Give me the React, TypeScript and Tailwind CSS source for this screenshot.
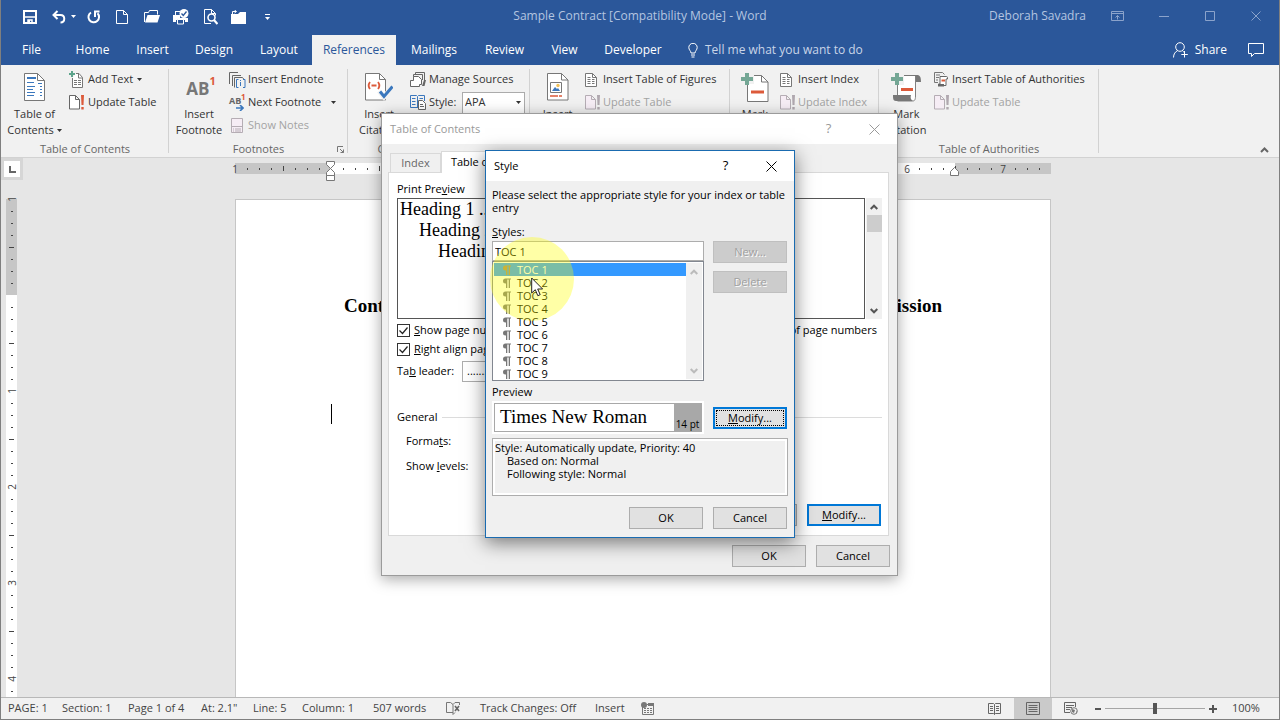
import type { ReactNode } from "react";

const tabs = [
  { name: "File", width: "w-[61px]" },
  { name: "Home", width: "w-[61px]" },
  { name: "Insert", width: "w-[59px]" },
  { name: "Design", width: "w-[64px]" },
  { name: "Layout", width: "w-[66px]" },
  { name: "References", width: "w-[84px]", active: true },
  { name: "Mailings", width: "w-[76px]" },
  { name: "Review", width: "w-[65px]" },
  { name: "View", width: "w-[55px]" },
  { name: "Developer", width: "w-[82px]" },
];

const styleNames = ["TOC 1", "TOC 2", "TOC 3", "TOC 4", "TOC 5", "TOC 6", "TOC 7", "TOC 8", "TOC 9"];

type IconProps = { w: number; h: number; children: ReactNode; className?: string };

const Icon = ({ w, h, children, className = "" }: IconProps) => (
  <svg width={w} height={h} viewBox={`0 0 ${w} ${h}`} fill="none" className={`shrink-0 ${className}`} aria-hidden="true">
    {children}
  </svg>
);

const Caret = ({ className = "" }: { className?: string }) => (
  <Icon w={5} h={3} className={className}>
    <path d="M0 0h5L2.500 3z" fill="currentColor" />
  </Icon>
);

/* ---------- Quick access icons ---------- */

const SaveIcon = () => (
  <Icon w={14} h={14}>
    <path d="M1 1h12v12H1z" stroke="#fff" strokeWidth="2" />
    <path d="M2 7h10M5 13v-3h4v3" stroke="#fff" strokeWidth="1.500" />
    <path d="M5 10h2v3H5z" fill="#fff" />
  </Icon>
);

const UndoIcon = () => (
  <Icon w={14} h={14}>
    <path d="M5.500 1 1.500 5l4 4M2 5h6.500c5 0 5 7.500 0 7.500" stroke="#fff" strokeWidth="2" />
  </Icon>
);

const RedoIcon = () => (
  <Icon w={14} h={14}>
    <path d="M4 2.500a5.300 5.300 0 1 0 6.500.8" stroke="#fff" strokeWidth="2" />
    <path d="M7 1.500h5.500M8 1v6" stroke="#fff" strokeWidth="2" />
  </Icon>
);

const NewIcon = () => (
  <Icon w={12} h={14}>
    <path d="M.500.500h7l4 4v9H.500zM7.500.500v4h4" stroke="#fff" />
  </Icon>
);

const OpenIcon = () => (
  <Icon w={16} h={13}>
    <path d="M.500 12V2.500h4l1-2h8v4" stroke="#fff" />
    <path d="M3.500 5H16l-2.500 7.500H1z" fill="#fff" />
  </Icon>
);

const PrintIcon = () => (
  <Icon w={16} h={16}>
    <path d="M0 6h2V2h5v1H3v3h4v3h8v4h-3v-2H3v2H0z" fill="#fff" />
    <path d="M4.500 10.500h6v4.500h-6z" fill="#2b579a" stroke="#fff" />
    <circle cx="11" cy="4.500" r="4.500" fill="#fff" />
    <path d="m8.500 4.500 1.800 2 3.200-4" stroke="#2b579a" strokeWidth="1.300" />
  </Icon>
);

const PreviewIcon = () => (
  <Icon w={14} h={16}>
    <path d="M.500.500h7l4 4v2M.500.500v14H7M7.500.500v4h4" stroke="#fff" />
    <circle cx="7.500" cy="8.500" r="3.500" stroke="#fff" strokeWidth="1.600" />
    <path d="m10 11 3.500 4" stroke="#fff" strokeWidth="2.200" />
  </Icon>
);

const FolderIcon = () => (
  <Icon w={15} h={14}>
    <path d="M0 4h7l2-2h6v12H0z" fill="#fff" />
    <path d="M1.500 4V1.500H5M3.500 0l2 1.500-2 1.500" stroke="#fff" />
  </Icon>
);

/* ---------- Ribbon icons ---------- */

const TocIcon = () => (
  <Icon w={21} h={28}>
    <path d="M.500.500h13l7 7v20H.500z" fill="#fff" stroke="#777" />
    <path d="M13.500.500v7h7" stroke="#777" />
    <path d="M3 5h9" stroke="#3a77bd" strokeWidth="2" />
    <path d="M3 9.500h7M3 13.500h8M3 16.500h6M3 19.500h8M3 22.500h7M14 10.500h4M16 13.500h2M16 16.500h2M16 19.500h2M16 22.500h2" stroke="#3a77bd" />
  </Icon>
);

const AddTextIcon = () => (
  <Icon w={15} h={17}>
    <path d="M3.500 7v9.500h10V6.500l-3.500-4H7" fill="#fff" stroke="#777" />
    <path d="M9.500 3v4h4M5 9.500h3M5 11.500h3M5 13.500h3M9 9.500h3M9 11.500h3M9 13.500h3" stroke="#777" />
    <path d="M3 0v6M0 3h6" stroke="#5da48c" strokeWidth="2" />
  </Icon>
);

const UpdateIcon = ({ disabled = false }: { disabled?: boolean }) => (
  <Icon w={16} h={15}>
    <path d="M.500.500h6l4 4v9.500H.500zM6.500.500v4h4" fill={disabled ? "#f6edf5" : "#fff"} stroke={disabled ? "#b5adb4" : "#666"} />
    <path d="M12 0h3l-.500 10h-2zM12.300 12h2.400v2.400h-2.400z" fill={disabled ? "#b0a8af" : "#dc5a3a"} />
  </Icon>
);

const EndnoteIcon = () => (
  <Icon w={17} h={16}>
    <path d="M.500 12V.500H9M3.500 14V3.500H12M5.500 15.500v-10h8l2 2.500" stroke="#666" />
    <path d="M7 7h10v9H7z" fill="#f1f1f1" />
    <path d="M9.500 7.500h-2v8h2M14 7.500h2v8h-2M11.500 10v4M11.500 8v1" stroke="#3a77bd" />
  </Icon>
);

const NextFootnoteIcon = () => (
  <span className="relative block h-4 w-[17px] shrink-0 font-bold text-[#666]">
    <span className="absolute top-0 left-0 text-[9px] leading-[12px]">AB</span>
    <span className="absolute -top-0.5 left-3 text-[8px] leading-[8px] text-[#dc5a3a]">1</span>
    <svg width="8" height="6" viewBox="0 0 8 6" className="absolute right-0.5 bottom-0" aria-hidden="true">
      <path d="M0 3h6M4 0l3 3-3 3" stroke="#3a77bd" strokeWidth="1.600" fill="none" />
    </svg>
  </span>
);

const NotesIcon = () => (
  <Icon w={12} h={15} className="ml-0.5">
    <path d="M.500.500h11v14H.500zM0 8.500h12" fill="#f6edf5" stroke="#b5adb4" />
    <path d="M2 11h1M4 11h6M2 13h1M4 13h6" stroke="#b5adb4" />
  </Icon>
);

const CitationIcon = () => (
  <Icon w={28} h={28}>
    <path d="M.500.500h14l6 6v20.500H.500z" fill="#fff" stroke="#777" />
    <path d="M14.500.500v6h6" stroke="#777" />
    <path d="M5 9c-1.500 2-1.500 5 0 7M13 9c1.500 2 1.500 5 0 7M6.500 12.500h5" stroke="#dc5a3a" strokeWidth="1.800" />
    <path d="m14 18 5 6 9-11" stroke="#f1f1f1" strokeWidth="5" />
    <path d="m15 18.500 4 5 8.500-10" stroke="#3a77bd" strokeWidth="3" />
  </Icon>
);

const SourcesIcon = () => (
  <Icon w={16} h={15}>
    <path d="M5.500 2V.500h9V10M3.500 5V2.500h9V8" stroke="#666" />
    <path d="M.500 14.500v-6h3v-4h5l3 3v5h-2v2z" fill="#fff" stroke="#666" />
    <path d="m12 14 2-6h2l-1.500 6z" fill="#666" />
  </Icon>
);

const StyleIcon = () => (
  <Icon w={16} h={15}>
    <path d="M.500.500h6l1 1 1-1h6V6M.500.500v12H7M7.500 2v11" stroke="#3a77bd" />
    <path d="M2 3.500h3.500M2 6.500h3.500M2 9.500h3.500M9.500 3.500H13" stroke="#3a77bd" />
    <path d="M8.500 5.500h4l3 3v6h-7zM10 9.500h3M10 11.500h4" fill="#fff" stroke="#666" />
  </Icon>
);

const CaptionIcon = () => (
  <Icon w={22} h={28}>
    <path d="M.500.500h14l6.500 6.500v20H.500z" fill="#fff" stroke="#777" />
    <path d="M14.500.500v6.500H21M3.500 9.500h11v10h-11z" stroke="#777" />
    <circle cx="11" cy="12.500" r="1.700" fill="#f0c05a" />
    <path d="m5 18 3-4 2 2 1-1 2 3z" fill="#3a77bd" />
    <path d="M3 23h8M12 23h3" stroke="#dc5a3a" strokeWidth="1.500" />
  </Icon>
);

const FiguresIcon = () => (
  <Icon w={12} h={14}>
    <path d="M.500.500h7l4 4v9H.500z" fill="#fff" stroke="#777" />
    <path d="M7.500.500v4h4M2.500 4.500h3M2.500 6.500h3M2.500 8.500h3M2.500 10.500h3M7 6.500h2.500M7 8.500h2.500M7 10.500h2.500" stroke="#777" />
  </Icon>
);

const MarkEntryIcon = () => (
  <Icon w={28} h={31}>
    <path d="M6.500 3.500h14l6.500 6.500v19.500H6.500z" fill="#fff" stroke="#777" />
    <path d="M20.500 3.500v6.500H27" stroke="#777" />
    <path d="M0 0h13v12H0z" fill="#f1f1f1" />
    <path d="M6 1v12M0 7h12" stroke="#74a795" strokeWidth="4" />
    <path d="M10 20h13" stroke="#dc5a3a" strokeWidth="3" />
  </Icon>
);

const MarkCitationIcon = () => (
  <Icon w={31} h={31}>
    <path d="M6.500 3.500h18V24c0 4-1 5-3 5H6.500z" fill="#fff" stroke="#808080" />
    <path d="M10 3h16c3 0 4 2 4 7h-5V6c0-2 0-2-2-2H10zM2 23h18c-1 3 0 5 2 6H5c-3 0-3-3-3-6z" fill="#777" />
    <path d="M0 0h13v13H0z" fill="#f1f1f1" />
    <path d="M6 1v12M0 7h12" stroke="#74a795" strokeWidth="4" />
    <path d="M10 17.500h12" stroke="#dc5a3a" strokeWidth="3" />
  </Icon>
);

const AuthoritiesIcon = () => (
  <Icon w={14} h={15}>
    <path d="M.500.500h8l2 2M.500.500v10H4M2 3h4M2 5.500h3M2 8h2" stroke="#777" />
    <path d="M6 4.500h6.500c1 0 1 1 1 2.500H12v6.500H4.500V12H6z" fill="#fff" stroke="#666" />
    <path d="M7.500 8.500H11" stroke="#dc5a3a" strokeWidth="2" />
    <path d="M4 12h6v2.500H4z" fill="#666" />
  </Icon>
);

/* ---------- Ribbon ---------- */

const Group = ({ label, width, launcher, children }: { label: string; width: string; launcher?: boolean; children: ReactNode }) => (
  <section className={`${width} relative flex shrink-0 flex-col pt-[3px]`} aria-label={label}>
    <div className="flex h-[73px] items-start">{children}</div>
    <p className="text-center leading-4 text-[#666]">{label}</p>
    {launcher && (
      <button className="absolute right-1 bottom-1" aria-label="Footnote settings">
        <Icon w={7} h={7}>
          <path d="M.500 6V.500H6M3 3l3.500 3.500M3.500 6.500h3v-3" stroke="#777" />
        </Icon>
      </button>
    )}
    <span className="absolute top-1 right-0 bottom-1 w-px bg-[#d2d2d2]" />
  </section>
);

const BigButton = ({ icon, width, children }: { icon: ReactNode; width: string; children: ReactNode }) => (
  <button className={`${width} shrink-0 text-center leading-4 whitespace-nowrap`}>
    <span className="flex h-[38px] items-center justify-center">{icon}</span>
    {children}
  </button>
);

const SmallButton = ({ icon, disabled, caret, iconWidth, children }: { icon: ReactNode; disabled?: boolean; caret?: string; iconWidth: string; children: ReactNode }) => (
  <button disabled={disabled} className="flex h-[23px] items-center whitespace-nowrap disabled:text-[#a3a3a3]">
    <span className={`${iconWidth} flex`}>{icon}</span>
    {children}
    {caret && <Caret className={caret} />}
  </button>
);

const Ribbon = () => (
  <div className="flex h-[93px] shrink-0 border-b border-[#d2d2d2] bg-[#f1f1f1] text-[11px] text-[#333]">
    <Group label="Table of Contents" width="w-[168px]">
      <BigButton icon={<TocIcon />} width="w-[67px]">
        Table of
        <br />
        <span className="inline-flex items-center gap-[3px]">Contents <Caret /></span>
      </BigButton>
      <div className="pl-px">
        <SmallButton icon={<AddTextIcon />} iconWidth="w-[19px]" caret="ml-1">Add Text</SmallButton>
        <SmallButton icon={<UpdateIcon />} iconWidth="w-[19px]">Update Table</SmallButton>
      </div>
    </Group>
    <Group label="Footnotes" width="w-[179px]" launcher>
      <BigButton
        width="w-[60px]"
        icon={
          <span className="flex items-start pl-1 font-bold">
            <span className="pt-1 text-[17px] leading-6 text-[#777]">AB</span>
            <span className="text-[11px] leading-4 text-[#dc5a3a]">1</span>
          </span>
        }
      >
        Insert
        <br />
        Footnote
      </BigButton>
      <div>
        <SmallButton icon={<EndnoteIcon />} iconWidth="w-[19px]">Insert Endnote</SmallButton>
        <SmallButton icon={<NextFootnoteIcon />} iconWidth="w-[19px]" caret="ml-2.5">Next Footnote</SmallButton>
        <SmallButton icon={<NotesIcon />} iconWidth="w-[19px]" disabled>Show Notes</SmallButton>
      </div>
    </Group>
    <Group label="Citations & Bibliography" width="w-[182px]">
      <BigButton icon={<CitationIcon />} width="w-[62px]">
        Insert
        <br />
        Citation
      </BigButton>
      <div>
        <SmallButton icon={<SourcesIcon />} iconWidth="w-[19px]">Manage Sources</SmallButton>
        <div className="flex h-[23px] items-center">
          <span className="flex w-[19px]"><StyleIcon /></span>
          <label htmlFor="citation-style" className="w-[33px]">Style:</label>
          <span className="relative flex items-center">
            <select id="citation-style" className="h-[22px] w-[63px] appearance-none border border-[#ababab] bg-white px-0.5">
              <option>APA</option>
            </select>
            <Caret className="absolute right-1" />
          </span>
        </div>
      </div>
    </Group>
    <Group label="Captions" width="w-[200px]">
      <BigButton icon={<CaptionIcon />} width="w-[55px]">
        Insert
        <br />
        Caption
      </BigButton>
      <div>
        <SmallButton icon={<FiguresIcon />} iconWidth="w-[18px]">Insert Table of Figures</SmallButton>
        <SmallButton icon={<UpdateIcon disabled />} iconWidth="w-[18px]" disabled>Update Table</SmallButton>
      </div>
    </Group>
    <Group label="Index" width="w-[149px]">
      <BigButton icon={<MarkEntryIcon />} width="w-[50px]">
        Mark
        <br />
        Entry
      </BigButton>
      <div>
        <SmallButton icon={<FiguresIcon />} iconWidth="w-[18px]">Insert Index</SmallButton>
        <SmallButton icon={<UpdateIcon disabled />} iconWidth="w-[18px]" disabled>Update Index</SmallButton>
      </div>
    </Group>
    <Group label="Table of Authorities" width="w-[220px]">
      <BigButton icon={<MarkCitationIcon />} width="w-[55px]">
        Mark
        <br />
        Citation
      </BigButton>
      <div>
        <SmallButton icon={<AuthoritiesIcon />} iconWidth="w-[18px]">Insert Table of Authorities</SmallButton>
        <SmallButton icon={<UpdateIcon disabled />} iconWidth="w-[18px]" disabled>Update Table</SmallButton>
      </div>
    </Group>
    <button className="mt-auto mr-2.5 mb-1 ml-auto" aria-label="Collapse the ribbon">
      <Icon w={9} h={6}>
        <path d="m1 5 3.500-3.500L8 5" stroke="#666" strokeWidth="2" />
      </Icon>
    </button>
  </div>
);

/* ---------- Rulers ---------- */

// One mark per eighth of an inch, counted from the margin at zero
const Mark = ({ n, vertical }: { n: number; vertical?: boolean }) => {
  const whole = n % 8 === 0;
  const half = n % 4 === 0;
  const cell = vertical ? "h-3 w-full" : "h-full w-3";
  return (
    <span className={`${cell} flex shrink-0 items-center justify-center text-[10px] leading-[12px] text-[#444]`}>
      {whole && n !== 0 && <span className={vertical ? "-rotate-90" : ""}>{Math.abs(n / 8)}</span>}
      {!whole && <span className={`bg-[#444] ${vertical ? (half ? "h-px w-[5px]" : "h-px w-0.5") : half ? "h-[5px] w-px" : "h-0.5 w-px"}`} />}
    </span>
  );
};

const Segment = ({ from, count, className, vertical }: { from: number; count: number; className: string; vertical?: boolean }) => (
  <div className={`flex shrink-0 ${vertical ? "w-[11px] flex-col" : "h-[11px]"} ${className}`}>
    <div className={`flex ${vertical ? "-mt-1.5 flex-col" : "-ml-1.5 h-full"}`}>
      {Array.from({ length: count }, (_, i) => (
        <Mark key={i} n={from + i} vertical={vertical} />
      ))}
    </div>
  </div>
);

const Document = () => (
  <main className="flex min-h-0 flex-1 flex-col overflow-hidden bg-[#e6e6e6]">
    <div className="flex h-[41px] shrink-0">
      <div className="w-[17px] shrink-0">
        <button className="flex h-[22px] w-[22px] items-center justify-center border-3 border-[#d6d6d6] bg-white" aria-label="Left tab">
          <Icon w={7} h={7}>
            <path d="M1 0v6h6" stroke="#666" strokeWidth="2" />
          </Icon>
        </button>
      </div>
      <div className="flex flex-1 justify-center pt-[5px] pr-[11px]">
        <div className="relative flex w-[816px]">
          <Segment from={-8} count={8} className="w-24 bg-[#c6c6c6]" />
          <Segment from={0} count={52} className="w-[624px] bg-white" />
          <Segment from={52} count={8} className="w-24 bg-[#c6c6c6]" />
          <Icon w={9} h={22} className="absolute -top-0.5 left-[91px]">
            <path d="M.500.500h8v3l-4 4-4-4zM.500 14.500v-3l4-4 4 4v3zM.500 14.500h8v5h-8z" fill="#fff" stroke="#777" />
          </Icon>
          <Icon w={9} h={9} className="absolute top-1 left-[715px]">
            <path d="M.500 8.500v-4l4-4 4 4v4z" fill="#fff" stroke="#777" />
          </Icon>
        </div>
      </div>
    </div>
    <div className="flex min-h-0 flex-1">
      <div className="w-[17px] shrink-0 pl-[5px]">
        <Segment vertical from={-8} count={8} className="h-24 bg-[#c6c6c6]" />
        <Segment vertical from={0} count={34} className="h-[408px] bg-white" />
      </div>
      <div className="flex flex-1 justify-center pr-[11px]">
        <article className="w-[816px] border border-b-0 border-[#c6c6c6] bg-white px-[95px] pt-[95px] font-['Liberation_Serif',serif] text-black">
          <h1 className="mx-auto flex w-[598px] justify-between text-[19px] leading-[22px] font-bold">
            <span>Contract</span>
            <span>Commission</span>
          </h1>
          <div className="mt-[87px] h-5 w-px bg-black" />
        </article>
      </div>
    </div>
  </main>
);

/* ---------- Dialogs ---------- */

const DialogTitle = ({ title, color }: { title: string; color: string }) => (
  <header className={`${color} flex h-[30px] items-center bg-white pl-2`}>
    <h2 className="flex-1">{title}</h2>
    <button className="w-[45px] text-[13px]" aria-label="Help">?</button>
    <button className="flex w-[46px] justify-center" aria-label="Close">
      <Icon w={11} h={11}>
        <path d="m.500.500 10 10M10.500.500l-10 10" stroke="currentColor" />
      </Icon>
    </button>
  </header>
);

const DialogButton = ({ children, primary, disabled }: { children: ReactNode; primary?: boolean; disabled?: boolean }) => (
  <button
    disabled={disabled}
    className={`h-[22px] w-[74px] text-center leading-4 disabled:border-[#bfbfbf] disabled:bg-[#ccc] disabled:text-[#a0a0a0] disabled:[text-shadow:1px_1px_0_#fff] ${
      primary ? "border-2 border-[#0078d7] bg-[#e1e1e1]" : "border border-[#adadad] bg-[#e1e1e1]"
    }`}
  >
    {children}
  </button>
);

const ScrollBar = ({ color, thumb }: { color: string; thumb?: boolean }) => (
  <div className={`${color} flex w-4 shrink-0 flex-col items-center bg-[#f0f0f0] pt-[6px] pb-[5px]`}>
    <Icon w={8} h={6}>
      <path d="m.700 5 3.300-3.300L7.300 5" stroke="currentColor" strokeWidth="2" />
    </Icon>
    {thumb && <div className="mt-[5px] h-[17px] w-[15px] bg-[#cdcdcd]" />}
    <Icon w={8} h={6} className="mt-auto">
      <path d="m.700 1 3.300 3.300L7.300 1" stroke="currentColor" strokeWidth="2" />
    </Icon>
  </div>
);

const Check = ({ id, checked, children }: { id: string; checked?: boolean; children: ReactNode }) => (
  <div className="flex h-[19px] items-center gap-1">
    <span className="relative flex">
      <input id={id} type="checkbox" defaultChecked={checked} className="peer h-[13px] w-[13px] appearance-none border border-[#333] bg-white" />
      <svg width="13" height="13" viewBox="0 0 13 13" className="pointer-events-none absolute inset-0 hidden peer-checked:block" aria-hidden="true">
        <path d="m2.500 6.500 3 3 5-6" stroke="#222" strokeWidth="1.200" fill="none" />
      </svg>
    </span>
    <label htmlFor={id} className="whitespace-nowrap">{children}</label>
  </div>
);

const ContentsDialog = () => (
  <div className="pointer-events-none absolute inset-x-0 top-[113px] flex justify-center pr-px">
    <div role="dialog" aria-label="Table of Contents" className="pointer-events-auto w-[517px] border border-[#9b9b9b] bg-[#f0f0f0] pb-2 text-[11px] text-black shadow-[0_3px_14px_rgba(0,0,0,0.35)]">
      <DialogTitle title="Table of Contents" color="text-[#999]" />
      <div className="px-1.5 pt-[7px]">
        <div className="flex items-end pl-0.5">
          <button className="h-[19px] w-[51px] border border-b-0 border-[#d9d9d9] text-[#666]">Index</button>
          <button className="relative -mb-px h-[22px] w-[110px] border border-b-0 border-[#d9d9d9] bg-white">Table of Contents</button>
        </div>
        <div className="flex h-[364px] w-[501px] flex-col border border-[#d9d9d9] bg-white pt-2 pr-1.5 pl-2">
          <div className="flex gap-5">
            <div className="w-[226px]">
              <p className="h-[17px] leading-4">Print Pre<u>v</u>iew</p>
              <div className="flex h-[121px]">
                <div className="w-[209px] border border-[#555] pl-0.5 font-['Liberation_Serif',serif] text-[18px] leading-[21px]">
                  <p>Heading 1 ................ 1</p>
                  <p className="pl-[19px]">Heading 2 ............ 3</p>
                  <p className="pl-[38px]">Heading 3 ......... 5</p>
                </div>
                <ScrollBar color="text-[#555]" thumb />
              </div>
            </div>
            <div className="flex-1">
              <p className="h-[17px] leading-4"><u>W</u>eb Preview</p>
              <div className="flex h-[121px]">
                <div className="mr-px flex-1 border border-[#555]" />
                <ScrollBar color="text-[#555]" thumb />
              </div>
            </div>
          </div>
          <div className="flex justify-between pt-[2px] pr-[5px]">
            <div>
              <Check id="show-numbers" checked><u>S</u>how page numbers</Check>
              <Check id="right-align" checked><u>R</u>ight align page numbers</Check>
            </div>
            <Check id="hyperlinks" checked>Use <u>h</u>yperlinks instead of page numbers</Check>
          </div>
          <div className="mt-0.5 flex h-[21px] items-center">
            <label htmlFor="leader" className="w-[65px]">Ta<u>b</u> leader:</label>
            <select id="leader" className="h-[21px] w-[120px] appearance-none border border-[#adadad] px-1">
              <option>.......</option>
            </select>
          </div>
          <div className="mt-[27px] flex h-4 items-center gap-[5px]">
            <span>General</span>
            <span className="h-px flex-1 bg-[#dcdcdc]" />
          </div>
          <div className="flex flex-col gap-1 pt-1.5 pl-[9px]">
            <div className="flex h-[21px] items-center">
              <label htmlFor="formats" className="w-20">Forma<u>t</u>s:</label>
              <select id="formats" className="h-[21px] w-[120px] appearance-none border border-[#adadad] px-1">
                <option>From template</option>
              </select>
            </div>
            <div className="flex h-[21px] items-center">
              <label htmlFor="levels" className="w-20">Show <u>l</u>evels:</label>
              <input id="levels" defaultValue="3" className="h-[21px] w-[50px] border border-[#adadad] px-1" />
            </div>
          </div>
          <div className="mt-auto mb-[9px] flex justify-end gap-2.5 pr-px">
            <DialogButton><u>O</u>ptions...</DialogButton>
            <DialogButton primary><u>M</u>odify...</DialogButton>
          </div>
        </div>
        <div className="flex justify-end gap-2.5 pt-[9px] pr-px">
          <DialogButton>OK</DialogButton>
          <DialogButton>Cancel</DialogButton>
        </div>
      </div>
    </div>
  </div>
);

const StyleDialog = () => (
  <div className="pointer-events-none absolute inset-x-0 top-[150px] z-10 flex justify-center">
    <div role="dialog" aria-label="Style" className="pointer-events-auto relative w-[310px] border border-[#1a6bb0] bg-[#f0f0f0] text-[11px] text-black shadow-[0_5px_18px_rgba(0,0,0,0.5)]">
      <DialogTitle title="Style" color="text-black" />
      <div className="px-1.5 pt-[7px] pb-2">
        <p className="leading-[13px]">
          Please select the appropriate style for your index or table
          <br />
          entry
        </p>
        <div className="mt-2.5 flex justify-between pr-px">
          <div className="w-[212px]">
            <label htmlFor="style-name" className="block h-[17px] leading-4"><u>S</u>tyles:</label>
            <input id="style-name" defaultValue="TOC 1" className="block h-5 w-full border border-[#adadad] bg-white px-0.5" />
            <div className="flex h-[120px] border border-[#828790] bg-white p-px">
              <ul role="listbox" aria-label="Styles" className="flex-1 leading-[13px]">
                {styleNames.map((name, i) => (
                  <li key={name} role="option" aria-selected={i === 0} className={`flex h-[13px] items-center gap-1.5 pl-2 ${i === 0 ? "bg-[#3399ff] text-white" : ""}`}>
                    <Icon w={9} h={10}>
                      <path d="M9 .500H3.500a2.500 2.500 0 0 0 0 5H4V10h1.300V1.500h1.400V10H8V1.500h1z" fill={i === 0 ? "#b08a50" : "#777"} />
                    </Icon>
                    {name}
                  </li>
                ))}
              </ul>
              <ScrollBar color="text-[#bbb]" />
            </div>
          </div>
          <div className="flex flex-col gap-2 pt-[17px]">
            <DialogButton disabled>New...</DialogButton>
            <DialogButton disabled>Delete</DialogButton>
          </div>
        </div>
        <p className="mt-[3px] h-4 leading-4">Preview</p>
        <div className="flex items-center justify-between pt-px pr-px">
          <div className="w-[212px] bg-white p-0.5">
            <div className="flex h-[29px] border border-[#a8a8a8]">
              <span className="flex-1 pl-[5px] font-['Liberation_Serif',serif] text-[19px] leading-[26px]">Times New Roman</span>
              <span className="flex w-[27px] items-end justify-center bg-[#a8a8a8] text-[10px] leading-[14px]">14 pt</span>
            </div>
          </div>
          <button className="h-[22px] w-[74px] border-2 border-[#0078d7] bg-[#e1e1e1] p-px">
            <span className="block border border-dotted border-black leading-[14px]"><u>M</u>odify...</span>
          </button>
        </div>
        <div className="mt-1 h-[58px] border border-[#adadad] bg-white p-0.5">
          <p className="h-full bg-[#f0f0f0] leading-[13px]">
            Style: Automatically update, Priority: 40
            <span className="block pl-3">Based on: Normal</span>
            <span className="block pl-3">Following style: Normal</span>
          </p>
        </div>
        <div className="flex justify-end gap-2.5 pt-[11px] pr-px">
          <DialogButton>OK</DialogButton>
          <DialogButton>Cancel</DialogButton>
        </div>
      </div>
      {/* click highlight and pointer */}
      <div className="pointer-events-none absolute top-[86px] left-[4px] h-[84px] w-[84px] rounded-full bg-[#ffff00]/35" />
      <Icon w={13} h={20} className="absolute top-[126px] left-[45px]">
        <path d="M.700 1v15l3.600-3.300 2.500 6 2.400-1-2.500-5.700h4.900z" fill="#fff" stroke="#222" />
      </Icon>
    </div>
  </div>
);

/* ---------- Window ---------- */

const TitleBar = () => (
  <header className="relative flex h-[35px] shrink-0 items-start pl-[22px] text-[12px] text-[#b4c5e0]">
    <div className="flex h-[33px] items-center text-white">
      <button className="w-[29px]" aria-label="Save"><SaveIcon /></button>
      <button className="flex w-[35px] items-center gap-[5px]" aria-label="Undo"><UndoIcon /><Caret /></button>
      <button className="w-[29px]" aria-label="Redo"><RedoIcon /></button>
      <button className="w-[28px]" aria-label="New"><NewIcon /></button>
      <button className="w-[29px]" aria-label="Open"><OpenIcon /></button>
      <button className="w-[31px]" aria-label="Quick print"><PrintIcon /></button>
      <button className="w-[27px]" aria-label="Print preview"><PreviewIcon /></button>
      <button className="w-[34px]" aria-label="Close file"><FolderIcon /></button>
      <button aria-label="Customize toolbar">
        <Icon w={5} h={6}>
          <path d="M0 3h5L2.500 6z" fill="#fff" />
          <path d="M0 .500h5" stroke="#fff" />
        </Icon>
      </button>
    </div>
    <h1 className="absolute inset-x-0 top-2 text-center leading-4">Sample Contract [Compatibility Mode] - Word</h1>
    <div className="relative ml-auto flex h-8 items-center pr-[18px]">
      <span className="mr-[25px]">Deborah Savadra</span>
      <button className="mr-[35px]" aria-label="Ribbon display options">
        <Icon w={13} h={10}>
          <path d="M.500.500h12v9H.500zM0 2.500h13M6.500 8.500v-4M4.500 6.500l2-2 2 2" stroke="#8ba3cb" />
        </Icon>
      </button>
      <button className="mr-9" aria-label="Minimize">
        <Icon w={10} h={10}><path d="M0 5.500h10" stroke="#8ba3cb" /></Icon>
      </button>
      <button className="mr-9" aria-label="Maximize">
        <Icon w={10} h={10}><path d="M.500.500h9v9h-9z" stroke="#8ba3cb" /></Icon>
      </button>
      <button aria-label="Close">
        <Icon w={10} h={10}><path d="m.500.500 9 9M9.500.500l-9 9" stroke="#8ba3cb" /></Icon>
      </button>
    </div>
  </header>
);

const Tabs = () => (
  <nav className="flex h-[30px] shrink-0 items-center text-[12px] text-white">
    {tabs.map((tab) => (
      <button key={tab.name} className={`${tab.width} h-full ${tab.active ? "bg-[#f1f1f1] text-[#2b579a]" : ""}`}>
        {tab.name}
      </button>
    ))}
    <Icon w={10} h={15} className="ml-[14px]">
      <path d="M3 10C3 8 .800 7 .800 4.500a4.200 4.200 0 0 1 8.400 0C9.200 7 7 8 7 10zM3 12h4M3.500 14h3" stroke="#fff" />
    </Icon>
    <button className="ml-[7px] text-[#c9d5e8]">Tell me what you want to do</button>
    <button className="ml-auto flex items-center gap-[7px]">
      <Icon w={15} h={16}>
        <circle cx="7" cy="5" r="4.300" stroke="#fff" />
        <path d="M.500 15.500c0-3.500 2-6 4-6.800M9.500 8.700c.800.500 1 .800 1.500 1.800M11.500 9v6.500M8.300 12.500h6.500" stroke="#fff" />
      </Icon>
      Share
    </button>
    <button className="mr-[15px] ml-[21px]" aria-label="Comments">
      <Icon w={16} h={14}>
        <path d="M.500.500h15v10H6.500l-3 3v-3h-3z" stroke="#fff" />
      </Icon>
    </button>
  </nav>
);

const StatusBar = () => (
  <footer className="flex h-[22px] shrink-0 items-center border-t border-[#b8b8b8] bg-[#f1f1f1] pl-[7px] text-[11px] text-[#444]">
    <span className="w-[54px]">PAGE: 1</span>
    <span className="w-[66px]">Section: 1</span>
    <span className="w-[73px]">Page 1 of 4</span>
    <span className="w-[52px]">At: 2.1"</span>
    <span className="w-[49px]">Line: 5</span>
    <span className="w-[71px]">Column: 1</span>
    <span className="w-[73px]">507 words</span>
    <span className="flex w-[34px]">
      <Icon w={14} h={13}>
        <path d="M7 10.500H.500V.500h4L7 2.500v10l2-2M7 2.500 9 .500h4.500V3" stroke="#777" />
        <path d="m9 4 4 5M13 4 9 9" stroke="#666" strokeWidth="1.600" />
      </Icon>
    </span>
    <span className="w-[115px]">Track Changes: Off</span>
    <span className="w-[46px]">Insert</span>
    <Icon w={13} h={13}>
      <path d="M1.500 5v7.500h11v-10H6" stroke="#777" />
      <path d="M7 1h6v3H7z" fill="#777" />
      <path d="M3 6.500h2M6 6.500h2M9 6.500h2M3 8.500h2M6 8.500h2M9 8.500h2M3 10.500h2M6 10.500h2M9 10.500h2" stroke="#777" />
      <circle cx="3" cy="3" r="3" fill="#777" />
    </Icon>
    <div className="ml-auto flex h-full items-center">
      <button className="mr-[13px]" aria-label="Read mode">
        <Icon w={13} h={12}>
          <path d="M6.500 1.500v10l-1-1h-5v-10h5zl1-1h5v10h-5l-1 1M2 3.500h3M2 5.500h3M2 7.500h3M8 3.500h3M8 5.500h3M8 7.500h3" stroke="#666" />
        </Icon>
      </button>
      <button className="flex h-full w-[38px] items-center justify-center bg-[#cacaca]" aria-label="Print layout">
        <Icon w={14} h={13}>
          <path d="M.500.500h13v12H.500zM2.500 3.500h9M2.500 5.500h9M2.500 7.500h9M2.500 9.500h9" stroke="#666" />
        </Icon>
      </button>
      <button className="mr-[17px] ml-3" aria-label="Web layout">
        <Icon w={14} h={13}>
          <path d="M6 10.500H.500V.500h11V5M2 3.500h8M2 5.500h6M2 7.500h4" stroke="#666" />
          <circle cx="10" cy="9" r="3.300" fill="#f1f1f1" stroke="#777" />
          <path d="m8 7 3 1-1 3-2-1zM12 9l1 1-1 1.500z" fill="#777" />
        </Icon>
      </button>
      <button className="h-0.5 w-1.5 bg-[#555]" aria-label="Zoom out" />
      <input
        type="range"
        aria-label="Zoom"
        className="mx-1 h-3 w-[100px] appearance-none bg-[linear-gradient(#a6a6a6,#a6a6a6)] bg-[length:100%_1px] bg-center bg-no-repeat [&::-webkit-slider-thumb]:h-[11px] [&::-webkit-slider-thumb]:w-1 [&::-webkit-slider-thumb]:appearance-none [&::-webkit-slider-thumb]:bg-[#555]"
      />
      <button aria-label="Zoom in">
        <Icon w={8} h={8}>
          <path d="M0 4h8M4 0v8" stroke="#555" strokeWidth="2" />
        </Icon>
      </button>
      <span className="w-[62px] pl-[15px]">100%</span>
    </div>
  </footer>
);

export default function App() {
  return (
    <div className="relative flex h-screen min-h-[640px] flex-col overflow-hidden border border-t-0 border-[#7f7f7f] bg-[#2b579a] font-['Open_Sans',sans-serif]">
      <TitleBar />
      <Tabs />
      <Ribbon />
      <Document />
      <StatusBar />
      <ContentsDialog />
      <StyleDialog />
    </div>
  );
}
